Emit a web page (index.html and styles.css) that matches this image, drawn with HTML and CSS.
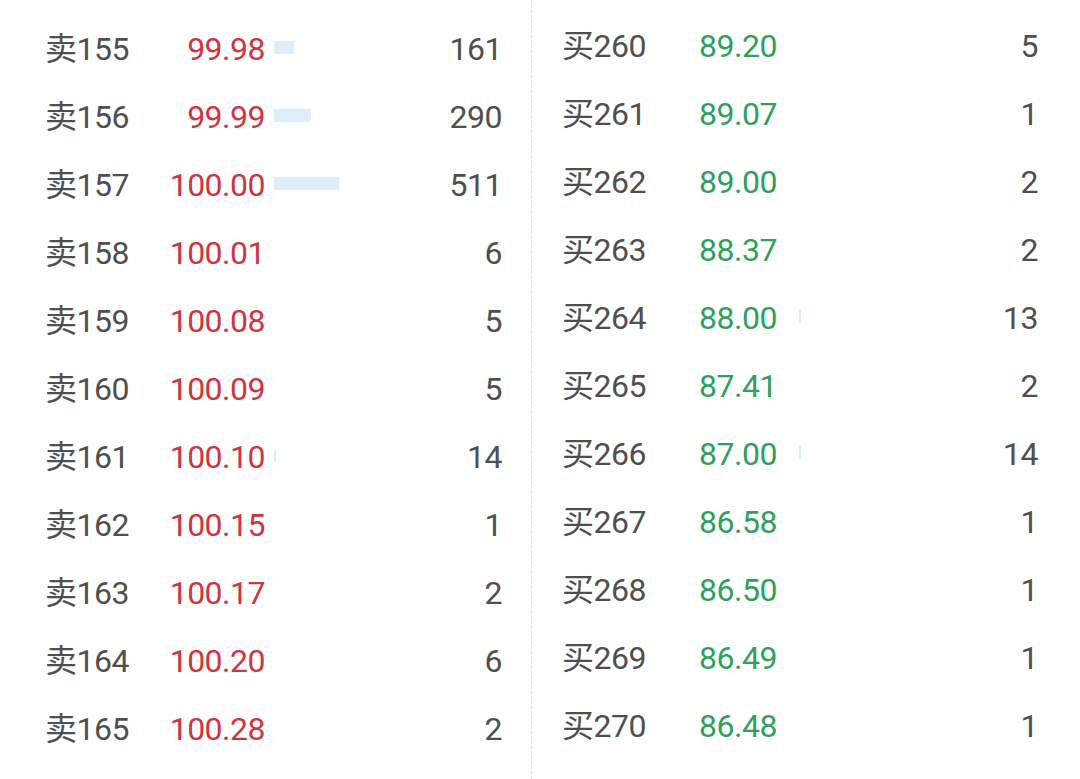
FILE: index.html
```html
<!DOCTYPE html>
<html lang="zh-CN">
<head>
    <meta charset="UTF-8">
    <meta name="viewport" content="width=device-width, initial-scale=1.0">
    <title>五档盘口</title>
    <link rel="stylesheet" href="styles.css">
</head>
<body>
    <div class="book">
        <div class="side sell">
            <div class="row"><span class="label">卖155</span><span class="price">99.98</span><span class="bar-area"><span class="bar" style="width:20px"></span></span><span class="qty">161</span></div>
            <div class="row"><span class="label">卖156</span><span class="price">99.99</span><span class="bar-area"><span class="bar" style="width:37px"></span></span><span class="qty">290</span></div>
            <div class="row"><span class="label">卖157</span><span class="price">100.00</span><span class="bar-area"><span class="bar" style="width:65px"></span></span><span class="qty">511</span></div>
            <div class="row"><span class="label">卖158</span><span class="price">100.01</span><span class="bar-area"></span><span class="qty">6</span></div>
            <div class="row"><span class="label">卖159</span><span class="price">100.08</span><span class="bar-area"></span><span class="qty">5</span></div>
            <div class="row"><span class="label">卖160</span><span class="price">100.09</span><span class="bar-area"></span><span class="qty">5</span></div>
            <div class="row"><span class="label">卖161</span><span class="price">100.10</span><span class="bar-area"><span class="bar" style="width:2px"></span></span><span class="qty">14</span></div>
            <div class="row"><span class="label">卖162</span><span class="price">100.15</span><span class="bar-area"></span><span class="qty">1</span></div>
            <div class="row"><span class="label">卖163</span><span class="price">100.17</span><span class="bar-area"></span><span class="qty">2</span></div>
            <div class="row"><span class="label">卖164</span><span class="price">100.20</span><span class="bar-area"></span><span class="qty">6</span></div>
            <div class="row"><span class="label">卖165</span><span class="price">100.28</span><span class="bar-area"></span><span class="qty">2</span></div>
        </div>
        <div class="side buy">
            <div class="row"><span class="label">买260</span><span class="price">89.20</span><span class="bar-area"></span><span class="qty">5</span></div>
            <div class="row"><span class="label">买261</span><span class="price">89.07</span><span class="bar-area"></span><span class="qty">1</span></div>
            <div class="row"><span class="label">买262</span><span class="price">89.00</span><span class="bar-area"></span><span class="qty">2</span></div>
            <div class="row"><span class="label">买263</span><span class="price">88.37</span><span class="bar-area"></span><span class="qty">2</span></div>
            <div class="row"><span class="label">买264</span><span class="price">88.00</span><span class="bar-area"><span class="bar" style="width:2px"></span></span><span class="qty">13</span></div>
            <div class="row"><span class="label">买265</span><span class="price">87.41</span><span class="bar-area"></span><span class="qty">2</span></div>
            <div class="row"><span class="label">买266</span><span class="price">87.00</span><span class="bar-area"><span class="bar" style="width:2px"></span></span><span class="qty">14</span></div>
            <div class="row"><span class="label">买267</span><span class="price">86.58</span><span class="bar-area"></span><span class="qty">1</span></div>
            <div class="row"><span class="label">买268</span><span class="price">86.50</span><span class="bar-area"></span><span class="qty">1</span></div>
            <div class="row"><span class="label">买269</span><span class="price">86.49</span><span class="bar-area"></span><span class="qty">1</span></div>
            <div class="row"><span class="label">买270</span><span class="price">86.48</span><span class="bar-area"></span><span class="qty">1</span></div>
        </div>
    </div>
</body>
</html>
```

FILE: styles.css
```css
body {
    margin: 0;
    background: #fff;
    font-family: Roboto, "Noto Sans CJK SC", sans-serif;
    color: #4f4f4f;
}
.book {
    display: flex;
    height: 779px;
}
.side {
    display: flex;
    flex-direction: column;
}
.sell {
    width: 532px;
    box-sizing: border-box;
    padding: 15px 29px 0 45px;
    border-right: 1px dashed #e2e2e2;
}
.buy {
    flex: 1;
    padding: 12px 42px 0 30px;
}
.row {
    display: flex;
    align-items: center;
    height: 68px;
    font-size: 32px;
    line-height: 36px;
    letter-spacing: -0.5px;
}
.label {
    width: 85px;
    white-space: nowrap;
}
.sell .price {
    width: 135px;
    text-align: right;
    color: #cf3540;
}
.sell .bar-area {
    margin-left: 9px;
}
.buy .label {
    width: 137px;
}
.buy .price {
    width: 100px;
    color: #30a05a;
}
.bar-area {
    flex: 1;
    display: flex;
    align-items: center;
    margin-top: -3px;
}
.bar {
    display: block;
    height: 13px;
    background: #ddedfa;
}
.qty {
    text-align: right;
}
```
